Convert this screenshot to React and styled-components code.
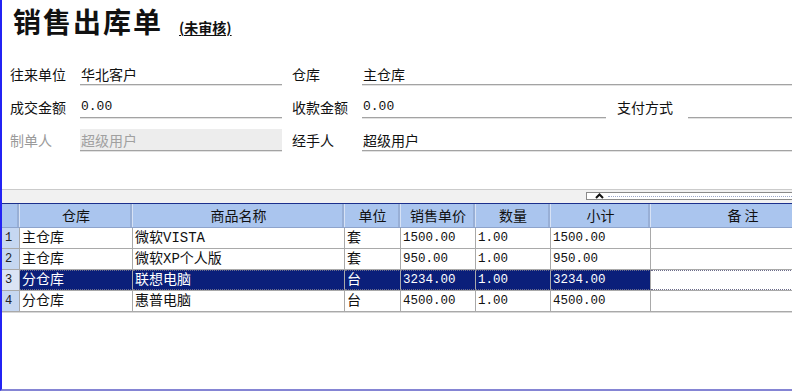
import React from 'react';
import styled, { createGlobalStyle } from 'styled-components';

const GlobalStyle = createGlobalStyle`
  body {
    margin: 0;
    background: #fff;
    font-family: 'Noto Sans CJK SC', 'Liberation Sans', sans-serif;
    overflow: hidden;
  }
`;

const COLS = '18px 113px 212px 56px 75px 75px 100px 184px';
const CJK = "'Noto Sans CJK SC', sans-serif";
const MONO = "'Liberation Mono', 'Noto Sans CJK SC', monospace";

const Window = styled.div`
  width: 792px;
  height: 391px;
  box-sizing: border-box;
  border-left: 2px solid #2323f4;
  border-bottom: 2px solid #8585d4;
  display: flex;
  flex-direction: column;
  overflow: hidden;
`;

const TitleBar = styled.div`
  height: 52px;
  box-sizing: border-box;
  padding: 4px 0 0 11px;
  display: flex;
  align-items: baseline;
  gap: 16px;
`;

const Title = styled.h1`
  margin: 0;
  font-family: ${CJK};
  font-size: 28px;
  line-height: 34px;
  font-weight: 700;
  letter-spacing: 2px;
  color: #111;
`;

const Status = styled.span`
  font-family: ${CJK};
  font-size: 14px;
  font-weight: 700;
  color: #111;
  text-decoration: underline;
  text-underline-offset: 2px;
`;

const Form = styled.div`
  height: 137px;
  box-sizing: border-box;
  padding: 11px 0 0 8px;
  display: flex;
  flex-direction: column;
  gap: 11px;
`;

const Row = styled.div`
  display: flex;
  gap: 10px;
  height: 22px;
`;

const Field = styled.div`
  display: flex;
  width: ${({ width }) => (width ? `${width}px` : 'auto')};
  flex: ${({ width }) => (width ? 'none' : '1')};
  margin-left: ${({ shift }) => shift || 0}px;
`;

const Label = styled.label`
  width: ${({ width }) => width || 70}px;
  flex: none;
  font-family: ${CJK};
  font-size: 14px;
  line-height: 22px;
  color: ${({ disabled }) => (disabled ? '#9a9a9a' : '#111')};
`;

const Input = styled.div`
  flex: 1;
  box-sizing: border-box;
  height: 22px;
  padding-left: 1px;
  border-bottom: 1px solid #a3a3a3;
  box-shadow: 0 1px 0 #e2e2e2;
  background: ${({ disabled }) => (disabled ? '#ededed' : '#fff')};
  color: ${({ disabled }) => (disabled ? '#a0a0a0' : '#111')};
  font-family: ${({ mono }) => (mono ? MONO : CJK)};
  font-size: ${({ mono }) => (mono ? 13 : 14)}px;
  line-height: 22px;
  white-space: nowrap;
`;

const Splitter = styled.div`
  height: 14px;
  box-sizing: border-box;
  border-top: 1px solid #cbcbcb;
  background: #f1f1f1;
  display: flex;
  padding-top: 2px;
`;

const Handle = styled.div`
  margin-left: auto;
  margin-right: -12px;
  width: 218px;
  height: 8px;
  box-sizing: border-box;
  border: 1px solid #8a8a8a;
  border-right: none;
  background: #fff;
  display: flex;
  align-items: center;
  gap: 4px;
  padding-left: 8px;
`;

const Dots = styled.div`
  flex: 1;
  border-top: 1px dotted #9aa6c8;
`;

const Grid = styled.div`
  border-top: 1px solid #1b2f8c;
`;

const GridRow = styled.div`
  display: grid;
  grid-template-columns: ${COLS};
  height: ${({ head }) => (head ? 24 : 21)}px;
  box-sizing: border-box;
  border-bottom: 1px solid ${({ head }) => (head ? '#8ea4cc' : '#a9a9a9')};
  background: ${({ head }) => (head ? '#aac5ee' : '#fff')};
`;

const HeadCell = styled.div`
  box-sizing: border-box;
  border-right: 1px solid #d7e2f5;
  box-shadow: inset -2px 0 0 #98afd6;
  text-align: center;
  font-family: ${CJK};
  font-size: 14px;
  line-height: 23px;
  color: #111;
  &:last-child {
    border-right: none;
    box-shadow: none;
  }
`;

const NumCell = styled.div`
  box-sizing: border-box;
  border-right: 1px solid #a9a9a9;
  background: ${({ active }) => (active ? '#dbe4f4' : '#c6d7f1')};
  padding-left: 3px;
  font-family: 'Liberation Mono', monospace;
  font-size: 12px;
  line-height: 20px;
  color: #222;
`;

const Cell = styled.div`
  box-sizing: border-box;
  border-right: 1px solid #a9a9a9;
  padding-left: 2px;
  overflow: hidden;
  white-space: nowrap;
  font-family: ${MONO};
  font-size: ${({ mono }) => (mono ? 12.5 : 14)}px;
  color: ${({ selected }) => (selected ? '#fff' : '#111')};
  background: ${({ selected }) => (selected ? '#0b1f7a' : '#fff')};
  border-top: ${({ selected, blank }) =>
    selected || blank ? '1px dotted #6d6d8a' : 'none'};
  border-bottom: ${({ selected, blank }) =>
    selected || blank ? '1px dotted #6d6d8a' : 'none'};
  line-height: ${({ selected, blank }) => (selected || blank ? 18 : 20)}px;
  &:last-child {
    border-right: none;
  }
`;

const TableEnd = styled.div`
  height: 1px;
  background: #d8d8d8;
`;

const headers = ['', '仓库', '商品名称', '单位', '销售单价', '数量', '小计', '备 注'];

const rows = [
  ['主仓库', '微软VISTA', '套', '1500.00', '1.00', '1500.00'],
  ['主仓库', '微软XP个人版', '套', '950.00', '1.00', '950.00'],
  ['分仓库', '联想电脑', '台', '3234.00', '1.00', '3234.00'],
  ['分仓库', '惠普电脑', '台', '4500.00', '1.00', '4500.00'],
];

const selectedRow = 2;

export default function App() {
  return (
    <>
      <GlobalStyle />
      <Window>
        <TitleBar>
          <Title>销售出库单</Title>
          <Status>(未审核)</Status>
        </TitleBar>

        <Form>
          <Row>
            <Field width={272}>
              <Label>往来单位</Label>
              <Input>华北客户</Input>
            </Field>
            <Field>
              <Label>仓库</Label>
              <Input>主仓库</Input>
            </Field>
          </Row>
          <Row>
            <Field width={272}>
              <Label>成交金额</Label>
              <Input mono>0.00</Input>
            </Field>
            <Field width={314}>
              <Label>收款金额</Label>
              <Input mono>0.00</Input>
            </Field>
            <Field shift={1}>
              <Label width={71}>支付方式</Label>
              <Input />
            </Field>
          </Row>
          <Row>
            <Field width={272}>
              <Label disabled>制单人</Label>
              <Input disabled>超级用户</Input>
            </Field>
            <Field>
              <Label>经手人</Label>
              <Input>超级用户</Input>
            </Field>
          </Row>
        </Form>

        <Splitter>
          <Handle>
            <svg width="9" height="6" viewBox="0 0 9 6">
              <path d="M1 5 L4.5 1.5 L8 5" fill="none" stroke="#111" strokeWidth="2" />
            </svg>
            <Dots />
          </Handle>
        </Splitter>

        <Grid>
          <GridRow head>
            {headers.map((h, i) => (
              <HeadCell key={i}>{h}</HeadCell>
            ))}
          </GridRow>
          {rows.map((r, i) => {
            const sel = i === selectedRow;
            return (
              <GridRow key={i}>
                <NumCell active={sel}>{i + 1}</NumCell>
                {r.map((v, j) => (
                  <Cell key={j} selected={sel} mono={j >= 3}>
                    {v}
                  </Cell>
                ))}
                <Cell blank={sel} />
              </GridRow>
            );
          })}
          <TableEnd />
        </Grid>
      </Window>
    </>
  );
}
